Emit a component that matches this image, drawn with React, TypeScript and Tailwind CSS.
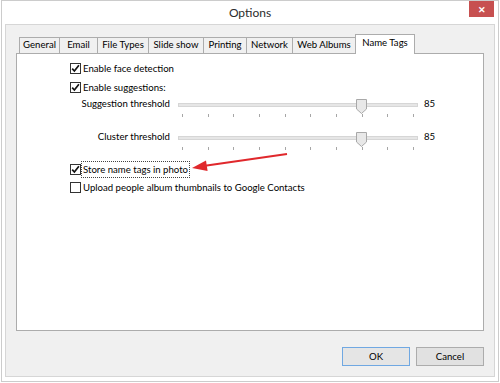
import React from 'react';

const tabs = [
    { label: 'General', w: 41 },
    { label: 'Email', w: 39 },
    { label: 'File Types', w: 52 },
    { label: 'Slide show', w: 56 },
    { label: 'Printing', w: 44 },
    { label: 'Network', w: 47 },
    { label: 'Web Albums', w: 64 },
    { label: 'Name Tags', w: 60, active: true },
];

const CheckBox: React.FC<{ checked: boolean }> = ({ checked }) => (
    <span className="flex h-[11px] w-[11px] shrink-0 items-center justify-center border border-[#333333] bg-white">
        {checked && (
            <svg width="9" height="9" viewBox="0 0 9 9">
                <path d="M1.2 4.6 L3.4 7 L7.9 1.3" fill="none" stroke="#111" strokeWidth="1.7" />
            </svg>
        )}
    </span>
);

const CheckRow: React.FC<{ label: string; checked: boolean; focused?: boolean; className?: string }> = ({
    label,
    checked,
    focused,
    className,
}) => (
    <div className={`flex items-center pl-[53px] ${className ?? ''}`}>
        <CheckBox checked={checked} />
        <span
            className={`whitespace-nowrap border px-px leading-[15px] ${focused ? 'border-dotted border-[#444444]' : 'border-transparent'}`}
        >
            {label}
        </span>
    </div>
);

const Slider: React.FC<{ label: string; value: number; className?: string }> = ({ label, value, className }) => (
    <div className={className}>
        <div className="flex h-[15px] items-center">
            <span className="w-[153px] whitespace-nowrap text-right">{label}</span>
            <div className="relative ml-[8px] h-[4px] w-[240px] border border-[#d6d6d6] bg-[#e6e6e6]">
                <svg className="absolute left-[177px] top-[-5px]" width="11" height="15" viewBox="0 0 11 15">
                    <path d="M0.5 0.5 H10.5 V10 L5.5 14.5 L0.5 10 Z" fill="#e8e8e8" stroke="#a8a8a8" />
                </svg>
            </div>
            <span className="ml-[6px]">{value}</span>
        </div>
        <div className="ml-[165px] mt-[2px] flex w-[232px] justify-between">
            {Array.from({ length: 10 }).map((_, i) => (
                <span key={i} className="h-[3px] w-px bg-[#a6a6a6]" />
            ))}
        </div>
    </div>
);

export default function App() {
    return (
        <div
            className="h-[383px] w-[500px] bg-white text-[9.6px] text-black"
            style={{ fontFamily: 'Lato, "Noto Sans", sans-serif' }}
        >
            <div className="ml-px flex h-[382px] w-[498px] flex-col border border-[#cccccc]">
                {/* title bar */}
                <div className="grid h-[23px] grid-cols-[1fr_auto_1fr]">
                    <div />
                    <div className="pt-[3px] text-[12px] leading-[18px] text-[#2b2b2b]">Options</div>
                    <div className="flex justify-end pr-[4px]">
                        <div className="flex h-[16px] w-[25px] items-center justify-center bg-[#c75050] text-[9px] font-bold leading-none text-white">
                            ✕
                        </div>
                    </div>
                </div>

                {/* client area */}
                <div className="ml-[3px] flex h-[353px] w-[490px] flex-col border border-[#d6d6d6] bg-[#f0f0f0] px-[10px] pt-[9px]">
                    <div className="flex items-end pl-[3px]">
                        {tabs.map((t, i) => (
                            <div
                                key={t.label}
                                style={{ width: t.w }}
                                className={`flex shrink-0 items-center justify-center whitespace-nowrap border border-b-0 border-[#acacac] ${
                                    i > 0 ? '-ml-px' : ''
                                } ${t.active ? 'relative z-10 -mb-px h-[20px] bg-white pb-[2px]' : 'h-[16px] bg-[#f0f0f0]'}`}
                            >
                                {t.label}
                            </div>
                        ))}
                    </div>

                    <div className="relative h-[278px] border border-[#acacac] bg-white pt-[6px]">
                        <CheckRow label="Enable face detection" checked className="h-[17px]" />
                        <CheckRow label="Enable suggestions:" checked className="mt-[1px] h-[18px]" />
                        <Slider label="Suggestion threshold" value={85} className="mt-[1px]" />
                        <Slider label="Cluster threshold" value={85} className="mt-[13px]" />
                        <CheckRow label="Store name tags in photo" checked focused className="mt-[11px] h-[17px]" />
                        <CheckRow
                            label="Upload people album thumbnails to Google Contacts"
                            checked={false}
                            className="mt-[1px] h-[17px]"
                        />

                        <svg className="pointer-events-none absolute left-0 top-0" width="466" height="276">
                            <g transform="translate(-17,-54)">
                                <line x1="205" y1="165.8" x2="287" y2="154" stroke="#e0282c" strokeWidth="2" />
                                <path d="M192 168 L206 160.6 L207.6 171 Z" fill="#e0282c" />
                            </g>
                        </svg>
                    </div>

                    <div className="mt-[16px] flex justify-end gap-[6px]">
                        <button className="h-[19px] w-[68px] border border-[#70a8e2] bg-[#e5e5e5] text-[9.6px] leading-none">
                            OK
                        </button>
                        <button className="h-[19px] w-[68px] border border-[#acacac] bg-[#e1e1e1] text-[9.6px] leading-none">
                            Cancel
                        </button>
                    </div>
                </div>
            </div>
        </div>
    );
}
